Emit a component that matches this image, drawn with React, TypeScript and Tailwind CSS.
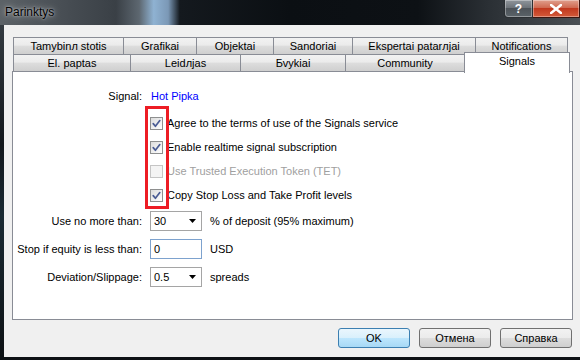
import React from 'react';

const FONT = { fontFamily: '"Liberation Sans", Arial, sans-serif' };

const ROW1 = [
  { label: 'Tamybinл stotis', w: 111 },
  { label: 'Grafikai', w: 74 },
  { label: 'Objektai', w: 78 },
  { label: 'Sandoriai', w: 80 },
  { label: 'Ekspertai patarлjai', w: 124 },
  { label: 'Notifications', w: 93 },
];

const ROW2 = [
  { label: 'El. paptas', w: 118 },
  { label: 'Leidлjas', w: 111 },
  { label: 'Бvykiai', w: 106 },
  { label: 'Community', w: 120 },
];

function Tab({ label, w }: { label: string; w: number }) {
  return (
    <div
      style={{ width: w }}
      className="-ml-px flex h-[18px] flex-none items-center justify-center border border-[#898c95] bg-[linear-gradient(#f2f2f2,#ebebeb_45%,#dddddd_50%,#cfcfcf)] text-[11px] leading-none text-black first:ml-0"
    >
      {label}
    </div>
  );
}

function Check({ checked, disabled }: { checked?: boolean; disabled?: boolean }) {
  return (
    <span
      className={`grid h-[13px] w-[13px] flex-none place-items-center border ${
        disabled ? 'border-[#c5c5c5] bg-[#f4f4f4]' : 'border-[#8e8f8f] bg-[linear-gradient(135deg,#dcdcdc,#ffffff)]'
      }`}
    >
      {checked && (
        <svg width="11" height="11" viewBox="0 0 11 11" fill="none">
          <path d="M2.2 5.6L4.4 8.3L8.8 2.6" stroke="#4a5c94" strokeWidth="1.7" strokeLinecap="round" strokeLinejoin="round" />
        </svg>
      )}
    </span>
  );
}

function Arrow() {
  return (
    <svg width="7" height="4" viewBox="0 0 7 4" className="flex-none">
      <path d="M0 0h7L3.5 4z" fill="#000" />
    </svg>
  );
}

function FieldRow({ label, children, suffix }: { label: string; children: React.ReactNode; suffix: string }) {
  return (
    <div className="flex h-[20px] items-center">
      <span className="w-[129px] text-right">{label}</span>
      <div className="ml-[8px] flex-none">{children}</div>
      <span className="ml-[8px]">{suffix}</span>
    </div>
  );
}

function Combo({ value }: { value: string }) {
  return (
    <div className="flex h-[20px] w-[52px] items-center justify-between border border-[#a5a5a5] bg-white pl-[3px] pr-[5px]">
      <span>{value}</span>
      <Arrow />
    </div>
  );
}

function Button({ label, primary }: { label: string; primary?: boolean }) {
  return (
    <div
      className={`flex h-[20px] items-center justify-center rounded-[3px] border text-[11px] ${
        primary
          ? 'w-[72px] border-[#3c7fb1] bg-[linear-gradient(#eaf6fd,#d9f0fc_50%,#bee6fd_50%,#a7d9f5)]'
          : 'w-[72px] border-[#707070] bg-[linear-gradient(#f2f2f2,#ebebeb_50%,#dddddd_50%,#cfcfcf)]'
      }`}
    >
      {label}
    </div>
  );
}

export default function App() {
  return (
    <div
      style={FONT}
      className="flex h-[360px] w-[580px] flex-col overflow-hidden bg-[linear-gradient(#3b4248,#12171c_40%,#1a2a33_60%,#0d1114)] text-[11px] text-black"
    >
      {/* title bar */}
      <div className="relative flex h-[25px] flex-none items-center bg-[linear-gradient(90deg,#5c6267,#464c52_12%,#3a4046_20%,#5d6770_24%,#8fb2d2_26.5%,#7b98b6_29%,#14191e_31%,#0b0f13_50%,#0d1115_72%,#2a2f34_84%,#4a4f54_100%)] pl-[5px]">
        <span className="pb-[2px] text-[12px] text-black [text-shadow:0_0_6px_rgba(255,255,255,0.7),0_0_2px_rgba(255,255,255,0.6)]">
          Parinktys
        </span>
        <div className="absolute right-0 top-0 flex h-[18px]">
          <div className="flex w-[29px] items-center justify-center rounded-bl-[4px] border border-t-0 border-[#2b2f33] bg-[linear-gradient(#8f959b,#6a7076_50%,#4d5359_50%,#5b6369)] text-[12px] font-bold text-white shadow-[inset_0_0_0_1px_rgba(255,255,255,0.35)]">
            ?
          </div>
          <div className="flex w-[47px] items-center justify-center border border-l-0 border-t-0 border-[#3a1510] bg-[linear-gradient(#e0a08e,#cf6a52_45%,#c1391f_50%,#d35a3a)] shadow-[inset_0_0_0_1px_rgba(255,255,255,0.35)]">
            <svg width="12" height="10" viewBox="0 0 12 10">
              <path d="M1 1l10 8M11 1L1 9" stroke="#fff" strokeWidth="2.6" strokeLinecap="square" />
            </svg>
          </div>
        </div>
      </div>

      {/* client area */}
      <div className="ml-[4px] flex h-[332px] flex-none flex-col bg-[#f0f0f0] pl-[8px]">
        {/* tab rows */}
        <div className="ml-[1px] mt-[12px] flex h-[18px]">
          {ROW1.map((t) => (
            <Tab key={t.label} {...t} />
          ))}
        </div>
        <div className="ml-[1px] -mt-px flex h-[18px] items-end">
          {ROW2.map((t) => (
            <Tab key={t.label} {...t} />
          ))}
          <div className="relative top-[1px] z-10 -ml-px flex h-[21px] w-[106px] flex-none justify-center border border-b-0 border-[#898c95] bg-white pt-[3px] text-[11px] leading-none">
            Signals
          </div>
        </div>

        {/* panel */}
        <div className="relative -mt-px h-[249px] w-[561px] border border-[#898c95] bg-white pt-[14px]">
          <div className="flex h-[20px] items-center">
            <span className="w-[129px] text-right">Signal:</span>
            <span className="ml-[9px] text-[#0000ff]">Hot Pipka</span>
          </div>
          <div className="mt-[5px] flex flex-col pl-[137px]">
            {[
              { label: 'Agree to the terms of use of the Signals service', checked: true },
              { label: 'Enable realtime signal subscription', checked: true },
              { label: 'Use Trusted Execution Token (TET)', disabled: true },
              { label: 'Copy Stop Loss and Take Profit levels', checked: true },
            ].map((r) => (
              <div key={r.label} className="flex h-[24px] items-center gap-[4px]">
                <Check checked={r.checked} disabled={r.disabled} />
                <span className={r.disabled ? 'text-[#a0a0a0]' : ''}>{r.label}</span>
              </div>
            ))}
          </div>
          <div className="mt-[4px] flex flex-col gap-[8px]">
            <FieldRow label="Use no more than:" suffix="% of deposit (95% maximum)">
              <Combo value="30" />
            </FieldRow>
            <FieldRow label="Stop if equity is less than:" suffix="USD">
              <div className="flex h-[20px] w-[52px] items-center border border-[#7da2ce] bg-white pl-[3px]">0</div>
            </FieldRow>
            <FieldRow label="Deviation/Slippage:" suffix="spreads">
              <Combo value="0.5" />
            </FieldRow>
          </div>

          {/* red highlight drawn over the checkboxes */}
          <div className="absolute left-[132px] top-[34px] h-[103px] w-[24px] border-[3px] border-[#ed1c24]" />
        </div>

        {/* buttons */}
        <div className="mt-[8px] flex gap-[9px] pl-[326px]">
          <Button label="OK" primary />
          <Button label="Отмена" />
          <Button label="Справка" />
        </div>
      </div>
    </div>
  );
}
